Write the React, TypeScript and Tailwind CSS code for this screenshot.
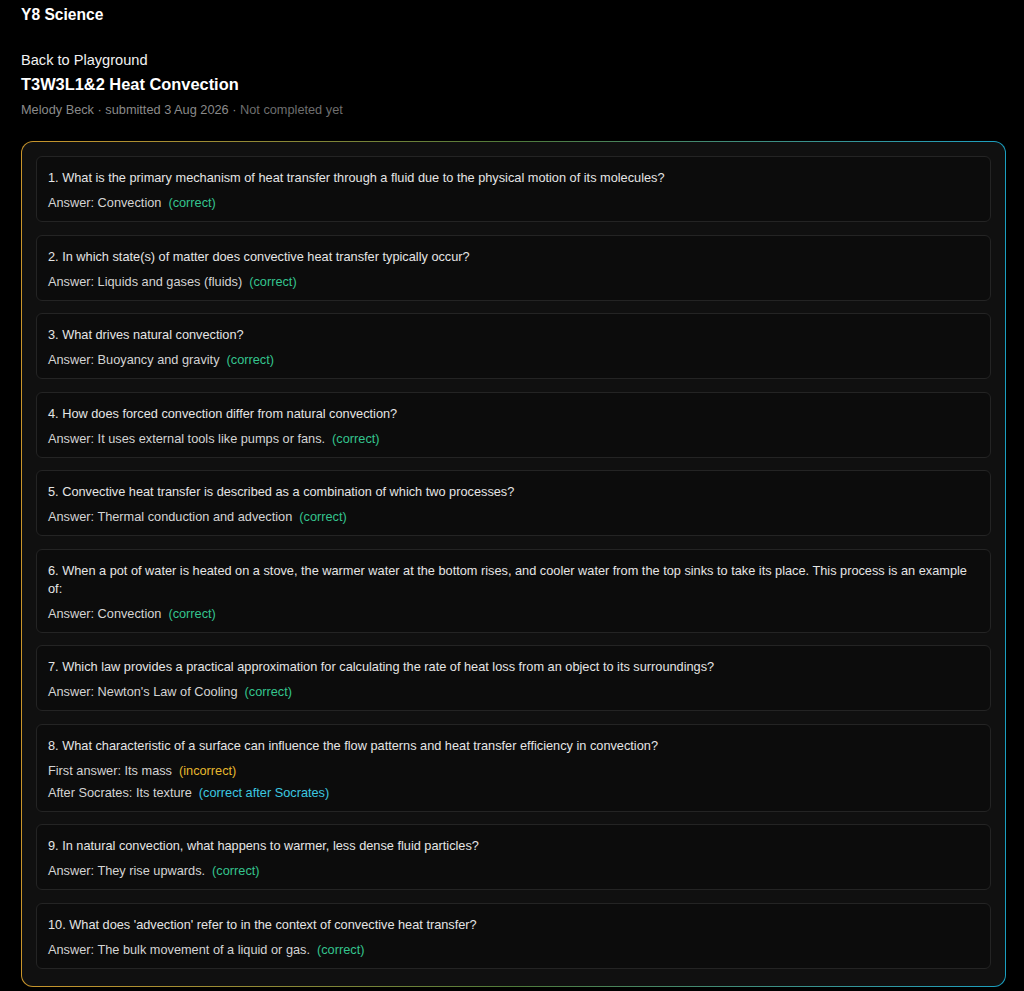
import React from "react";

type Item = {
  q: string;
  answer?: string;
  first?: string;
  after?: string;
};

const items: Item[] = [
  { q: "1. What is the primary mechanism of heat transfer through a fluid due to the physical motion of its molecules?", answer: "Convection" },
  { q: "2. In which state(s) of matter does convective heat transfer typically occur?", answer: "Liquids and gases (fluids)" },
  { q: "3. What drives natural convection?", answer: "Buoyancy and gravity" },
  { q: "4. How does forced convection differ from natural convection?", answer: "It uses external tools like pumps or fans." },
  { q: "5. Convective heat transfer is described as a combination of which two processes?", answer: "Thermal conduction and advection" },
  {
    q: "6. When a pot of water is heated on a stove, the warmer water at the bottom rises, and cooler water from the top sinks to take its place. This process is an example of:",
    answer: "Convection",
  },
  { q: "7. Which law provides a practical approximation for calculating the rate of heat loss from an object to its surroundings?", answer: "Newton's Law of Cooling" },
  { q: "8. What characteristic of a surface can influence the flow patterns and heat transfer efficiency in convection?", first: "Its mass", after: "Its texture" },
  { q: "9. In natural convection, what happens to warmer, less dense fluid particles?", answer: "They rise upwards." },
  { q: "10. What does 'advection' refer to in the context of convective heat transfer?", answer: "The bulk movement of a liquid or gas." },
];

function QuestionCard({ item }: { item: Item }) {
  return (
    <div className="rounded-md border border-[#242424] bg-[#0c0c0c] px-[11px] pt-[12px] pb-[9px]">
      <p className="text-[12.75px] leading-[18px] text-[#e5e5e5]">{item.q}</p>
      {item.answer ? (
        <p className="mt-[7px] text-[12.75px] leading-[18px] text-[#d4d4d4]">
          Answer: {item.answer}
          <span className="ml-[7px] text-[#34c48e]">(correct)</span>
        </p>
      ) : (
        <div className="mt-[7px] flex flex-col gap-[4px]">
          <p className="text-[12.75px] leading-[18px] text-[#d4d4d4]">
            First answer: {item.first}
            <span className="ml-[7px] text-[#e6b82e]">(incorrect)</span>
          </p>
          <p className="text-[12.75px] leading-[18px] text-[#d4d4d4]">
            After Socrates: {item.after}
            <span className="ml-[7px] text-[#3cc8e0]">(correct after Socrates)</span>
          </p>
        </div>
      )}
    </div>
  );
}

export default function App() {
  return (
    <div className="min-h-screen bg-black pl-[21px] pr-[18px] pt-[4px] pb-[5px] font-['Liberation_Sans',Arial,sans-serif] text-white">
      <h2 className="text-[15.6px] font-bold leading-[22px]">Y8 Science</h2>

      <p className="mt-[23px] text-[14.6px] leading-[22px] text-[#f2f2f2]">Back to Playground</p>
      <h1 className="mt-px text-[16.4px] font-bold leading-[24px]">T3W3L1&amp;2 Heat Convection</h1>
      <p className="mt-[5px] text-[12.75px] leading-[18px] text-[#8a8a8a]">
        Melody Beck · submitted 3 Aug 2026 · <span className="text-[#6e6e6e]">Not completed yet</span>
      </p>

      {/* gradient-bordered panel */}
      <div className="mt-[22px] rounded-xl bg-gradient-to-r from-[#c9952b] via-[#4f7a3a] to-[#1a9fc0] p-px">
        <div className="flex flex-col gap-[12.5px] rounded-[11px] bg-[#101010] px-[14px] pt-[14px] pb-[17px]">
          {items.map((item) => (
            <QuestionCard key={item.q} item={item} />
          ))}
        </div>
      </div>
    </div>
  );
}
